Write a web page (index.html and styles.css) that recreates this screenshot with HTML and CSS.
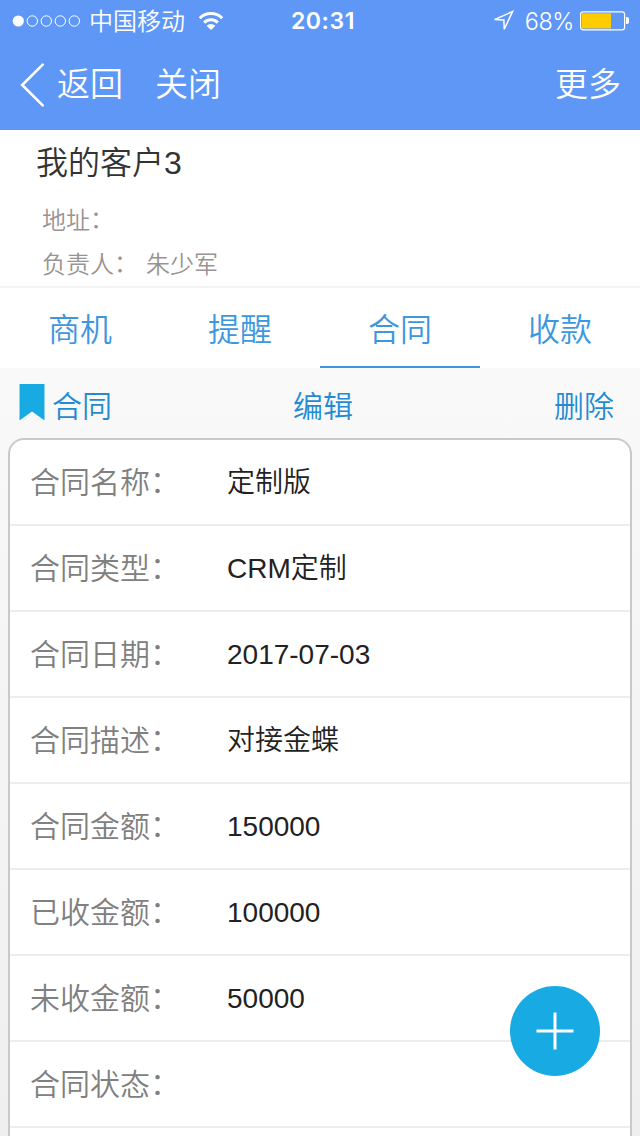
FILE: index.html
```html
<!DOCTYPE html>
<html lang="zh-CN">
<head>
<meta charset="utf-8">
<title>我的客户3</title>
<link rel="stylesheet" href="styles.css">
</head>
<body>
<header class="top">
  <div class="status">
    <div class="status-left">
      <svg class="signal" width="70" height="14" viewBox="0 0 70 14" fill="none" stroke="#fff"><circle cx="6.3" cy="7" r="5.6" fill="#fff" stroke="none"/><circle cx="20.3" cy="7" r="5.2"/><circle cx="34.3" cy="7" r="5.2"/><circle cx="48.3" cy="7" r="5.2"/><circle cx="62.3" cy="7" r="5.2"/></svg>
      <span class="carrier">中国移动</span>
      <svg class="wifi" width="26" height="20" viewBox="0 0 26 20" fill="none" stroke="#fff" stroke-width="3"><path d="M1.800 7.200a15.800 15.800 0 0 1 22.400 0M6.200 11.600a9.700 9.700 0 0 1 13.600 0"/><path d="M13 19 8.600 14.800a6.200 6.200 0 0 1 8.800 0Z" fill="#fff" stroke="none"/></svg>
    </div>
    <span class="clock">20:31</span>
    <div class="status-right">
      <svg class="location" width="22" height="22" viewBox="0 0 22 22" fill="none" stroke="#fff" stroke-width="1.5"><path d="M2.500 9.600 20.500 1.600 12.200 19.200 11.900 9.900Z"/></svg>
      <span class="percent">68%</span>
      <svg class="battery" width="50" height="20" viewBox="0 0 50 20"><rect x=".6" y=".9" width="44" height="18" rx="2.6" fill="none" stroke="#fff" stroke-width="1.2"/><rect x="2" y="2.4" width="29" height="15" fill="#fc0"/><path d="M46 6h1q2 0 2 2v3q0 2-2 2h-1Z" fill="#fff"/></svg>
    </div>
  </div>
  <nav class="nav">
    <svg class="back-icon" width="25" height="44" viewBox="0 0 25 44" fill="none" stroke="#fff" stroke-width="2.6" stroke-linecap="round"><path d="M22.700 1.600 2.200 22 22.700 42.400"/></svg>
    <span class="back">返回</span>
    <span class="close">关闭</span>
    <span class="more">更多</span>
  </nav>
</header>
<section class="customer">
  <h1 class="name">我的客户3</h1>
  <p class="meta"><span>地址<i class="colon">：</i></span></p>
  <p class="meta"><span>负责人<i class="colon">：</i></span><span>朱少军</span></p>
</section>
<nav class="tabs">
  <span class="tab">商机</span>
  <span class="tab">提醒</span>
  <span class="tab active">合同</span>
  <span class="tab">收款</span>
</nav>
<main class="panel">
  <div class="bar">
    <svg class="bookmark" width="26" height="38" viewBox="0 0 26 38"><path d="M.5 1.500 25.500 1.500V38L13 26.500.5 38Z" fill="#fff"/><path d="M.5 0h25v36.500L13 27.500.5 36.500Z" fill="#18abe3"/></svg>
    <span class="bar-title">合同</span>
    <span class="edit">编辑</span>
    <span class="delete">删除</span>
  </div>
  <dl class="card">
    <div class="row"><dt>合同名称<i class="colon">：</i></dt><dd>定制版</dd></div>
    <div class="row"><dt>合同类型<i class="colon">：</i></dt><dd>CRM定制</dd></div>
    <div class="row"><dt>合同日期<i class="colon">：</i></dt><dd>2017-07-03</dd></div>
    <div class="row"><dt>合同描述<i class="colon">：</i></dt><dd>对接金蝶</dd></div>
    <div class="row"><dt>合同金额<i class="colon">：</i></dt><dd>150000</dd></div>
    <div class="row"><dt>已收金额<i class="colon">：</i></dt><dd>100000</dd></div>
    <div class="row"><dt>未收金额<i class="colon">：</i></dt><dd>50000</dd></div>
    <div class="row"><dt>合同状态<i class="colon">：</i></dt><dd></dd></div>
  </dl>
</main>
<div class="add"><svg width="38" height="38" viewBox="0 0 38 38" stroke="#fff" stroke-width="3"><path d="M19 .5V37.500M.5 19H37.500"/></svg></div>
</body>
</html>
```
FILE: styles.css
```css
* { box-sizing: border-box; margin: 0; padding: 0; }
body {
  width: 640px;
  height: 1136px;
  overflow: hidden;
  display: flex;
  flex-direction: column;
  background: #fff;
  font-family: "Liberation Sans", "Noto Sans CJK SC", sans-serif;
  font-weight: 350;
}
svg { display: block; flex: none; }
.colon { font-style: normal; position: relative; top: -.03em; }
.top { height: 130px; background: #5e97f6; color: #fff; flex: none; }
.status { height: 40px; display: grid; grid-template-columns: 1fr auto 1fr; align-items: center; padding: 0 10px 0 12px; line-height: 39px; }
.status-left, .status-right { display: flex; align-items: center; }
.status-right { justify-content: flex-end; }
.carrier { font-size: 24px; margin-left: 7px; padding-top: 2px; }
.wifi { margin-left: 13px; }
.clock { font-family: Inter, sans-serif; font-weight: 600; font-size: 23px; letter-spacing: .6px; margin-left: 4px; padding-top: 2px; }
.percent { font-family: Inter, sans-serif; font-weight: 350; font-size: 23.5px; letter-spacing: -.4px; margin: 1px 6px 0 11px; }
.nav { height: 90px; display: flex; align-items: center; padding: 0 19px 0 20px; font-size: 33px; line-height: 90px; }
.back { margin-left: 12px; }
.close { margin-left: 32px; }
.more { margin-left: auto; }
.customer { height: 158px; padding: 10px 36px 0; border-bottom: 2px solid #f4f4f4; flex: none; }
.name { font-size: 32px; font-weight: 350; line-height: 46px; height: 59px; color: #333; }
.meta { font-size: 24px; line-height: 44px; height: 44px; padding-left: 6px; color: #999392; display: flex; gap: 8px; }
.tabs { height: 80px; display: grid; grid-template-columns: repeat(4, 1fr); text-align: center; font-size: 32px; line-height: 84px; color: #3d97de; flex: none; }
.tab { height: 80px; }
.active { border-bottom: 2px solid #3d97de; }
.panel { height: 768px; flex: none; padding: 0 8px; background: linear-gradient(#f9f9f9, #efefef); }
.bar { height: 70px; display: flex; align-items: center; padding: 0 18px 0 11px; font-size: 30px; color: #248bd2; }
.bar span { padding-top: 6px; height: 70px; line-height: 66px; }
.bar-title { margin-left: 7px; }
.bar .edit { margin-left: 181px; }
.bar .delete { margin-left: auto; }
.card { height: 698px; border: 2px solid #c9c9c9; border-bottom: 0; border-radius: 16px 16px 0 0; background: #fff; }
.row { height: 86px; display: flex; padding-left: 20px; border-bottom: 2px solid #ededed; line-height: 84px; }
.row dt { width: 197px; font-size: 30px; color: #808080; padding-top: 1px; }
.row dd { font-size: 28px; color: #222; padding-top: 1px; }
.add { position: fixed; left: 510px; top: 986px; width: 90px; height: 90px; border-radius: 50%; background: #18abe3; display: flex; align-items: center; justify-content: center; }
```
